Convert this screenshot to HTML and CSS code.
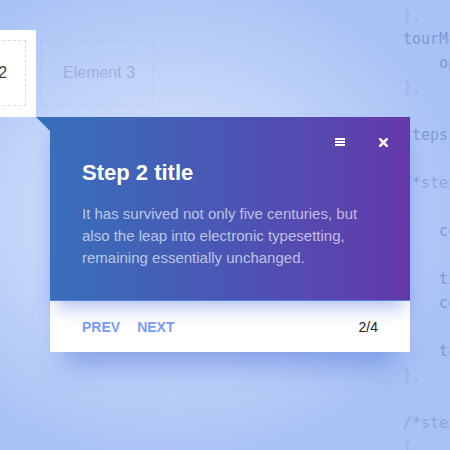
FILE: index.html
```html
<!DOCTYPE html>
<html lang="en">
<head>
<meta charset="utf-8">
<title>Tour step 2</title>
<link rel="stylesheet" href="styles.css">
</head>
<body>
<div class="stage">
  <pre class="code"><span class="p">},</span>
tourMap<span class="p">: {</span>
    options<span class="p">: {</span>
<span class="p">},</span>

steps<span class="p">: [</span>

<span class="c">/*step 1*/</span>
<span class="p">{</span>
    content<span class="p">:</span>

    title<span class="p">:</span>
    content<span class="p">:</span>

    target<span class="p">:</span>
<span class="p">},</span>

<span class="c">/*step 2*/</span>
<span class="p">{</span></pre>

  <div class="elements">
    <div class="element is-active">Element 2</div>
    <div class="element is-dim">Element 3</div>
  </div>

  <div class="tour">
    <span class="tour-arrow"></span>
    <div class="tour-head">
      <div class="tour-tools">
        <button class="tool" aria-label="Menu">
          <svg width="10" height="8" viewBox="0 0 10 8"><rect x="0" y="0" width="10" height="2" fill="#fff"/><rect x="0" y="3" width="10" height="2" fill="#fff"/><rect x="0" y="6" width="10" height="2" fill="#fff"/></svg>
        </button>
        <button class="tool" aria-label="Close">
          <svg width="9" height="9" viewBox="0 0 9 9"><path d="M1.2 1.2 L7.8 7.8 M7.8 1.2 L1.2 7.8" stroke="#fff" stroke-width="2.6" stroke-linecap="square"/></svg>
        </button>
      </div>
      <h2 class="tour-title">Step 2 title</h2>
      <p class="tour-text">It has survived not only five centuries, but also the leap into electronic typesetting, remaining essentially unchanged.</p>
    </div>
    <div class="tour-foot">
      <div class="tour-nav">
        <a class="nav-link">PREV</a>
        <a class="nav-link">NEXT</a>
      </div>
      <span class="tour-count">2/4</span>
    </div>
  </div>
</div>
</body>
</html>
```

FILE: styles.css
```css
html, body {
  margin: 0;
  padding: 0;
  width: 450px;
  height: 450px;
  overflow: hidden;
}

body {
  font-family: "Liberation Sans", Arial, sans-serif;
  background:
    radial-gradient(ellipse 300px 250px at 170px 215px, #d8e4fd 0%, #c6d7fa 45%, #a8c2f5 100%),
    #a8c2f5;
}

.stage {
  position: relative;
  width: 450px;
  height: 450px;
  overflow: hidden;
}

.code {
  position: absolute;
  left: 403px;
  top: 3px;
  margin: 0;
  font-family: "DejaVu Sans Mono", "Liberation Mono", monospace;
  font-size: 15px;
  line-height: 24px;
  color: #8199d4;
  white-space: pre;
}

.code .p { color: #9cb2e6; }
.code .c { color: #8fa6dd; }

.elements {
  display: flex;
  gap: 14px;
  padding-top: 40px;
  margin-left: -88px;
}

.element {
  box-sizing: border-box;
  width: 114px;
  height: 66px;
  padding-left: 22px;
  display: flex;
  align-items: center;
  font-size: 16px;
}

.element.is-active {
  border: 1px dashed #dcdcdc;
  color: #444;
  background: #fff;
  box-shadow: 0 0 0 10px #fff, 0 1px 0 10px #fff;
}

.element.is-dim {
  border: 1px dashed rgba(140, 165, 225, 0.2);
  color: #9db0dc;
}

.tour {
  position: absolute;
  left: 50px;
  top: 117px;
  width: 360px;
  background: #fff;
  box-shadow: 0 26px 26px -14px rgba(60, 95, 210, 0.45);
  z-index: 2;
}

.tour-arrow {
  position: absolute;
  left: -14px;
  top: 0;
  width: 0;
  height: 0;
  border-top: 14px solid #386fbb;
  border-left: 14px solid transparent;
}

.tour-head {
  position: relative;
  z-index: 1;
  padding: 11px 32px 31px;
  background: linear-gradient(90deg, #386fbb 0%, #4d53b3 55%, #6538aa 100%);
  border-bottom: 1px solid #4c86dd;
  box-shadow: 0 12px 18px -6px rgba(70, 105, 220, 0.45);
}

.tour-tools {
  display: flex;
  justify-content: flex-end;
  align-items: center;
  gap: 25px;
  height: 28px;
  margin-right: -14px;
}

.tool {
  display: flex;
  align-items: center;
  justify-content: center;
  width: 18px;
  height: 18px;
  padding: 0;
  border: 0;
  background: transparent;
}

.tour-title {
  margin: 4px 0 0;
  font-size: 22px;
  line-height: 26px;
  font-weight: bold;
  color: #fff;
}

.tour-text {
  margin: 17px 0 0;
  font-size: 15px;
  line-height: 22px;
  color: rgba(255, 255, 255, 0.65);
}

.tour-foot {
  display: flex;
  align-items: center;
  justify-content: space-between;
  height: 51px;
  padding: 0 32px;
}

.tour-nav {
  display: flex;
  gap: 17px;
}

.nav-link {
  font-size: 14px;
  font-weight: bold;
  color: #7a9df5;
}

.tour-count {
  font-size: 14px;
  color: #222;
}
```
